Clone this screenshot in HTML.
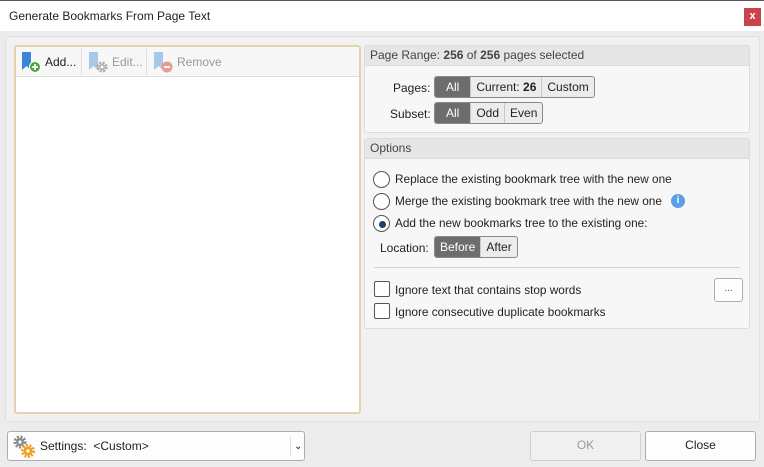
<!DOCTYPE html>
<html><head><meta charset="utf-8"><style>
*{box-sizing:border-box;margin:0;padding:0}
body{width:764px;height:467px;overflow:hidden;background:#ececec;font-family:"Liberation Sans",sans-serif;font-size:12px;color:#222;position:relative}
.a{position:absolute}
.title{left:0;top:0;width:764px;height:31px;background:#fff;border-top:1px solid #555}
.seg{position:absolute;display:flex;height:22px;border:1px solid #8a8a8a;border-radius:3px;overflow:hidden;background:#ececec}
.seg span{padding:0 5px;line-height:20px;border-left:1px solid #c8c8c8}
.seg span:first-child{border-left:none}
.seg .on{background:#6d6d6d;color:#fff}
.grp{position:absolute;background:#f7f7f7;border:1px solid #dcdcdc;border-radius:3px}
.gh{height:20px;background:#e6e6e6;border-bottom:1px solid #dcdcdc;line-height:19px;padding-left:5px;color:#444}
.rad{position:absolute;width:17px;height:17px;border:1px solid #555;border-radius:50%;background:#fff}
.chk{position:absolute;width:16px;height:16px;border:1px solid #555;border-radius:2px;background:#fff}
.btn{position:absolute;border:1px solid #adadad;border-radius:3px;background:#fdfdfd;text-align:center;line-height:27px}
.t{font-size:11.8px}
</style></head><body>
<div class="a title"><div class="a" style="left:9px;top:8px;font-size:12px">Generate Bookmarks From Page Text</div>
<div class="a" style="left:744px;top:7px;width:17px;height:18px;background:#c9434b;color:#fff;font-weight:bold;font-size:11px;text-align:center;line-height:17px">x</div></div>
<div class="a" style="left:5px;top:36px;width:755px;height:386px;background:#f1f1f1;border:1px solid #e0e0e0;border-radius:3px"></div>
<div class="a" style="left:14px;top:45px;width:347px;height:369px;background:#fff;border:2px solid #e2d3ae;border-radius:3px">
 <div style="height:30px;background:#f7f7f7;border-bottom:1px solid #ddd;position:relative">
  <svg class="a" style="left:4px;top:4px" width="22" height="22"><path d="M2 1h9v18l-4.5-4L2 19z" fill="#3a86d6"/><circle cx="15" cy="16" r="5.5" fill="#4ea53c" stroke="#fff"/><path d="M15 13v6M12 16h6" stroke="#fff" stroke-width="1.8"/></svg>
  <div class="a" style="left:29px;top:8px">Add...</div>
  <div class="a" style="left:65px;top:2px;width:1px;height:26px;background:#ddd"></div>
  <svg class="a" style="left:71px;top:4px" width="22" height="22"><path d="M2 1h9v18l-4.5-4L2 19z" fill="#a8c8ea"/><circle cx="15" cy="16" r="4" fill="none" stroke="#aaa" stroke-width="3" stroke-dasharray="2 1.2"/><circle cx="15" cy="16" r="3" fill="#bbb"/><circle cx="15" cy="16" r="1.3" fill="#fff"/></svg>
  <div class="a" style="left:96px;top:8px;color:#999">Edit...</div>
  <div class="a" style="left:130px;top:2px;width:1px;height:26px;background:#ddd"></div>
  <svg class="a" style="left:136px;top:4px" width="22" height="22"><path d="M2 1h9v18l-4.5-4L2 19z" fill="#a8c8ea"/><circle cx="15" cy="16" r="5.5" fill="#eb9a8e"/><path d="M12 16h6" stroke="#fff" stroke-width="1.8"/></svg>
  <div class="a" style="left:161px;top:8px;color:#999">Remove</div>
 </div>
</div>
<div class="grp" style="left:364px;top:45px;width:386px;height:88px">
 <div class="gh">Page Range: <b>256</b> of <b>256</b> pages selected</div>
 <div class="a" style="left:28px;top:35px">Pages:</div>
 <div class="seg" style="left:69px;top:30px"><span class="on" style="padding:0 11px">All</span><span>Current: <b>26</b></span><span>Custom</span></div>
 <div class="a" style="left:25px;top:61px">Subset:</div>
 <div class="seg" style="left:69px;top:56px"><span class="on" style="padding:0 11px">All</span><span>Odd</span><span>Even</span></div>
</div>
<div class="grp" style="left:364px;top:138px;width:386px;height:191px">
 <div class="gh">Options</div>
 <div class="rad" style="left:8px;top:32px"></div><div class="a t" style="left:30px;top:33px">Replace the existing bookmark tree with the new one</div>
 <div class="rad" style="left:8px;top:54px"></div><div class="a t" style="left:30px;top:55px">Merge the existing bookmark tree with the new one</div>
 <div class="a" style="left:306px;top:55px;width:14px;height:14px;border-radius:50%;background:#5a9ee6;color:#fff;font-size:10px;font-weight:bold;text-align:center;line-height:14px">i</div>
 <div class="rad" style="left:8px;top:76px"></div><div class="a" style="left:14px;top:82px;width:7px;height:7px;border-radius:50%;background:#1e3f66"></div>
 <div class="a t" style="left:30px;top:77px">Add the new bookmarks tree to the existing one:</div>
 <div class="a" style="left:15px;top:102px">Location:</div>
 <div class="seg" style="left:69px;top:97px"><span class="on">Before</span><span>After</span></div>
 <div class="a" style="left:9px;top:128px;width:366px;height:1px;background:#d4d4d4"></div>
 <div class="chk" style="left:9px;top:142px"></div><div class="a t" style="left:30px;top:144px">Ignore text that contains stop words</div>
 <div class="chk" style="left:9px;top:164px"></div><div class="a t" style="left:30px;top:166px">Ignore consecutive duplicate bookmarks</div>
 <div class="btn" style="left:349px;top:139px;width:29px;height:24px;line-height:20px;font-size:10px;color:#555">...</div>
</div>
<div class="btn" style="left:7px;top:431px;width:298px;height:30px;text-align:left">
 <svg class="a" style="left:4px;top:2px" width="26" height="26"><circle cx="8" cy="8" r="5" fill="none" stroke="#8a8a8a" stroke-width="3" stroke-dasharray="2 1.4"/><circle cx="8" cy="8" r="4" fill="#8a8a8a"/><circle cx="8" cy="8" r="1.6" fill="#fff"/><circle cx="16" cy="17" r="5.5" fill="none" stroke="#f0a020" stroke-width="3" stroke-dasharray="2 1.4"/><circle cx="16" cy="17" r="4.5" fill="#f0a020"/><circle cx="16" cy="17" r="1.8" fill="#fff"/></svg>
 <div class="a" style="left:32px;top:1px">Settings:&nbsp; &lt;Custom&gt;</div>
 <div class="a" style="left:282px;top:4px;width:1px;height:20px;background:#ddd"></div>
 <div class="a" style="left:286px;top:1px;font-size:10px">&#8964;</div>
</div>
<div class="btn" style="left:530px;top:431px;width:111px;height:30px;background:#f0f0f0;border-color:#d0d0d0;color:#999">OK</div>
<div class="btn" style="left:645px;top:431px;width:111px;height:30px">Close</div>
</body></html>
